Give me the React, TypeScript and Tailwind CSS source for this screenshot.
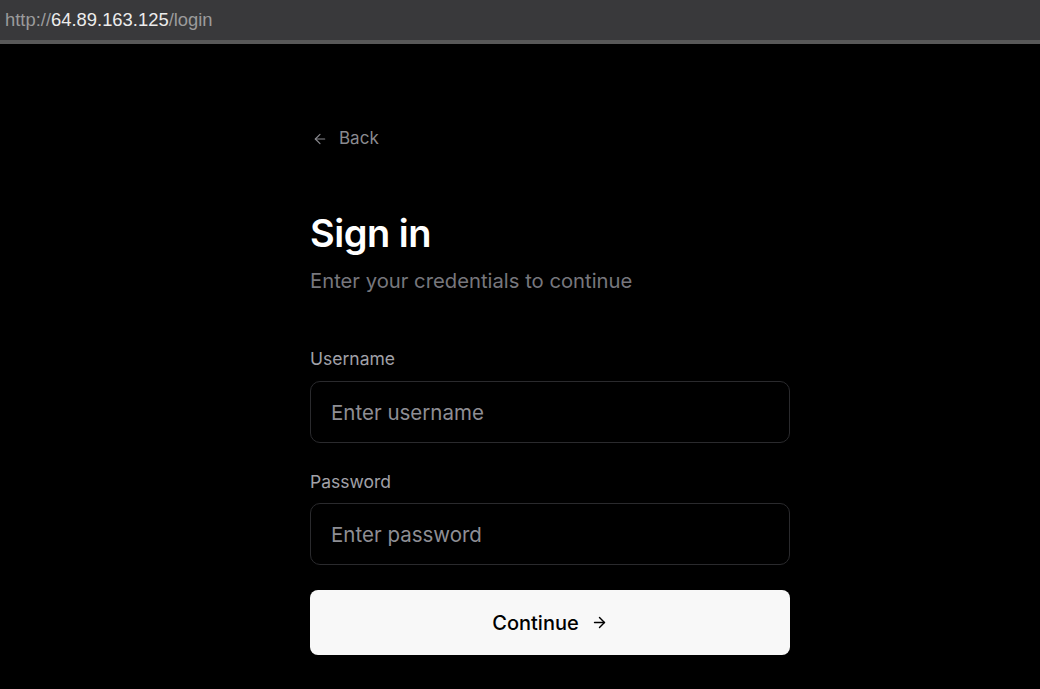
import { ArrowLeft, ArrowRight } from "lucide-react";

export default function App() {
  return (
    <div className="w-[1040px] h-[689px] bg-black overflow-hidden flex flex-col" style={{ fontFamily: "Inter, 'Noto Sans', sans-serif" }}>
      <div className="h-[40px] bg-[#39393b] flex items-center px-[5px] text-[18.4px] shrink-0" style={{ fontFamily: "'Liberation Sans', Arial, sans-serif" }}>
        <span className="text-[#9b9b9b]">http://</span>
        <span className="text-[#ececec]">64.89.163.125</span>
        <span className="text-[#9b9b9b]">/login</span>
      </div>
      <div className="h-[4px] bg-[#585858] shrink-0" />

      <div className="flex-1 pl-[310px]">
        <div className="w-[480px] pt-[84px]">
          <a href="#" className="flex items-center gap-[11px] text-[#8a8a8f] text-[17px] h-[22px]">
            <ArrowLeft size={16} strokeWidth={1.75} className="ml-[2px]" />
            <span>Back</span>
          </a>

          <h1 className="mt-[61px] text-[38px] font-semibold text-white leading-[44px] tracking-[-0.5px]">Sign in</h1>
          <p className="mt-[13px] text-[20.25px] text-[#77777d] leading-[26px]">Enter your credentials to continue</p>

          <form className="mt-[54px] flex flex-col">
            <label className="text-[17.5px] text-[#a1a1a8] leading-[22px]">Username</label>
            <input
              type="text"
              placeholder="Enter username"
              className="mt-[11px] h-[62px] w-full rounded-[10px] border border-[#2a2a2d] bg-black px-[20px] text-[20.5px] text-white placeholder:text-[#8e8e94] outline-none"
            />

            <label className="mt-[28px] text-[17.5px] text-[#a1a1a8] leading-[22px]">Password</label>
            <input
              type="password"
              placeholder="Enter password"
              className="mt-[10px] h-[62px] w-full rounded-[10px] border border-[#2a2a2d] bg-black px-[20px] text-[20.5px] text-white placeholder:text-[#8e8e94] outline-none"
            />

            <button
              type="button"
              className="mt-[25px] h-[65px] w-full rounded-[8px] bg-[#f8f8f8] flex items-center justify-center gap-[12px] text-[20px] font-medium text-black"
            >
              <span>Continue</span>
              <ArrowRight size={17} strokeWidth={2} />
            </button>
          </form>
        </div>
      </div>
    </div>
  );
}
